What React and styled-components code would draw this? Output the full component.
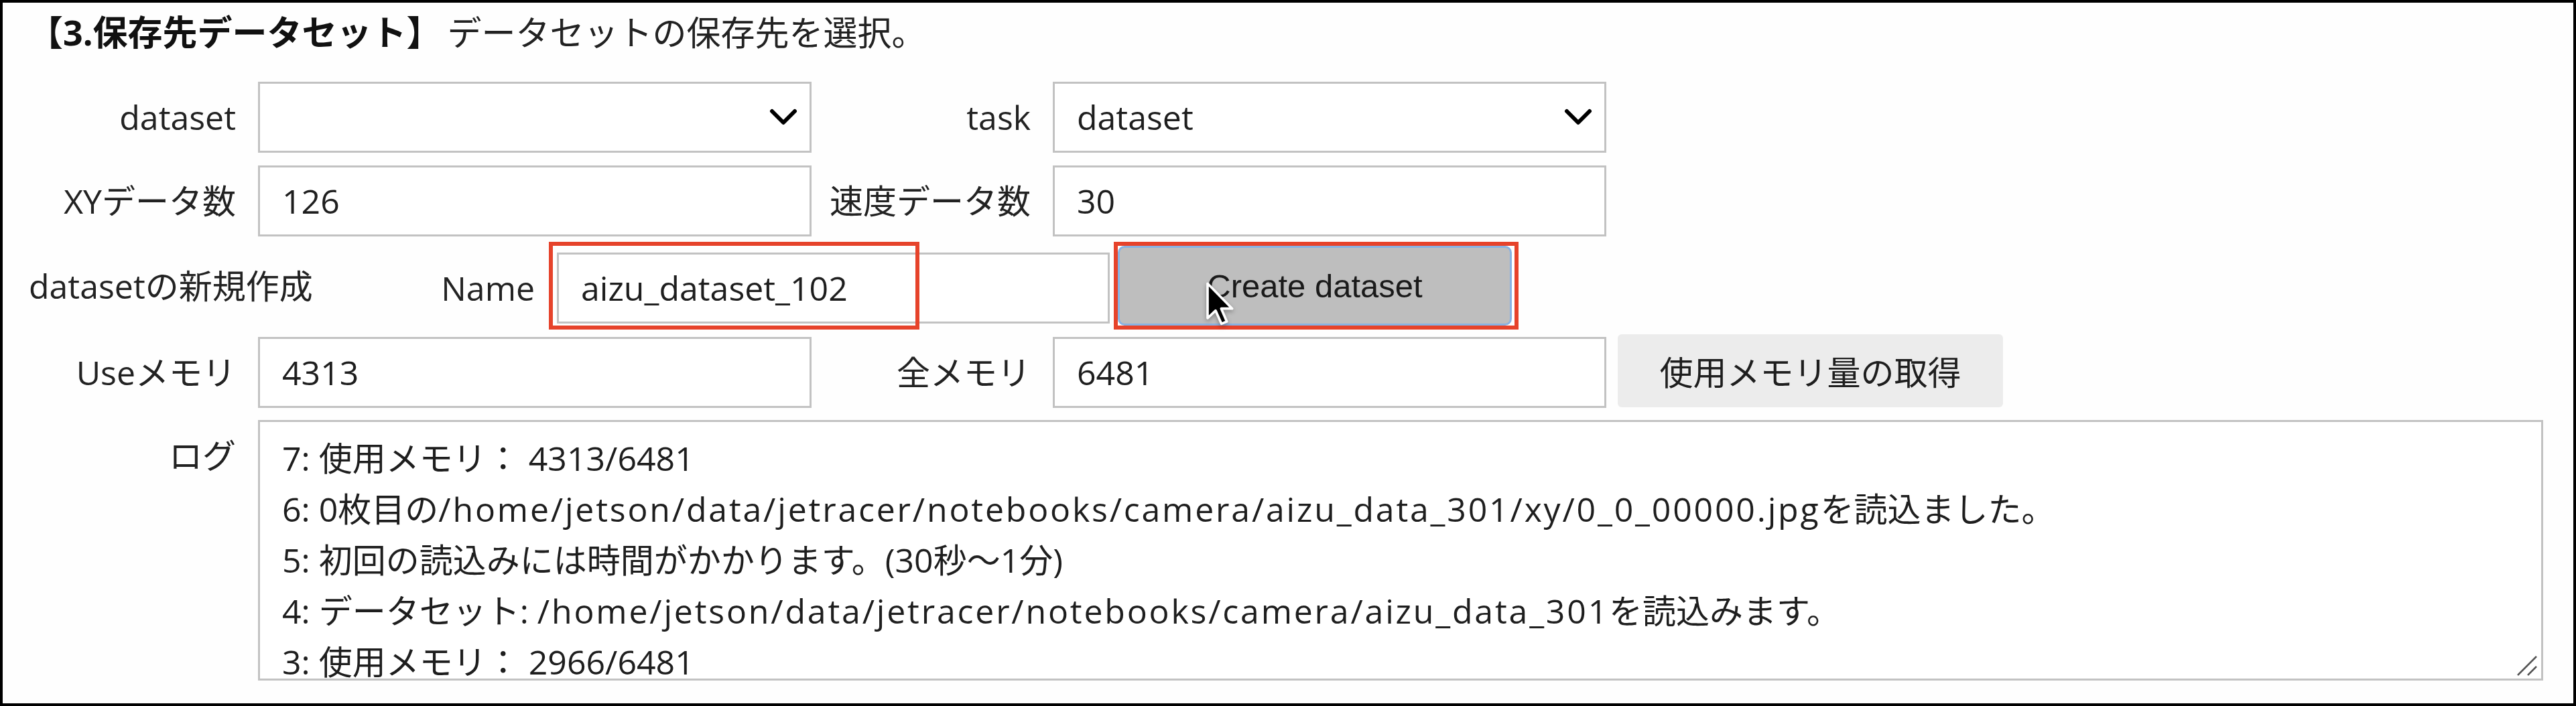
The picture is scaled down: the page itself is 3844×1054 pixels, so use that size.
import React from 'react';
import styled, { createGlobalStyle } from 'styled-components';

const GlobalStyle = createGlobalStyle`
  html, body {
    margin: 0;
    padding: 0;
    background: #fff;
  }
  body {
    font-family: "Open Sans", "Noto Sans CJK JP", sans-serif;
  }
`;

const Frame = styled.div`
  position: relative;
  width: 3844px;
  height: 1054px;
  box-sizing: border-box;
  border: 4px solid #000;
  background: #fefefe;
  padding: 14px 0 0 38px;
  font-size: 50px;
  color: #222;
  overflow: hidden;
`;

const Title = styled.div`
  display: flex;
  align-items: center;
  height: 60px;
  line-height: 60px;
  white-space: nowrap;
`;

const TitleStrong = styled.span`
  font-weight: 700;
  font-size: 52px;
  color: #111;
`;

const TitleNote = styled.span`
  margin-left: 9px;
  font-size: 51px;
`;

const Row = styled.div`
  display: flex;
  align-items: ${p => p.$align || 'center'};
  gap: 17px;
  height: ${p => p.$h}px;
  margin-top: ${p => p.$mt}px;
`;

const Field = styled.div`
  display: flex;
  align-items: ${p => p.$align || 'center'};
  gap: 33px;
  margin-top: ${p => p.$shift || 0}px;
`;

const Label = styled.label`
  flex: none;
  width: ${p => p.$w || 310}px;
  text-align: ${p => p.$left ? 'left' : 'right'};
  white-space: nowrap;
  line-height: 60px;
  padding-left: ${p => p.$left ? 1 : 0}px;
  box-sizing: border-box;
  margin-top: ${p => p.$mt || 0}px;
`;

const TextInput = styled.input`
  flex: none;
  width: ${p => p.$w || 826}px;
  height: 106px;
  box-sizing: border-box;
  border: 3px solid #c2c2c2;
  border-radius: 0;
  background: #fff;
  padding: 0 18px 0 33px;
  font: inherit;
  color: #1e1e1e;
  outline: none;
`;

const SelectBox = styled.div`
  flex: none;
  width: 826px;
  height: 106px;
  box-sizing: border-box;
  border: 3px solid #c2c2c2;
  background: #fff;
  padding: 0 18px 0 33px;
  display: flex;
  align-items: center;
  justify-content: space-between;
  color: #1e1e1e;
`;

const Chevron = () => (
  <svg width="42" height="26" viewBox="0 0 42 26">
    <polyline points="4,4 21,21 38,4" fill="none" stroke="#000" strokeWidth="6" strokeLinecap="round" strokeLinejoin="round" />
  </svg>
);

const CreateButton = styled.button`
  flex: none;
  width: 588px;
  height: 119px;
  margin-left: -5px;
  box-sizing: border-box;
  background: #bebebe;
  border: 3px solid #88b2e2;
  border-radius: 10px;
  font: 49px "Liberation Sans", "Noto Sans CJK JP", sans-serif;
  color: #1a1a1a;
  padding: 0;
`;

const GrayButton = styled.button`
  flex: none;
  width: 575px;
  height: 109px;
  align-self: flex-start;
  margin-top: -4px;
  box-sizing: border-box;
  background: #ececec;
  border: none;
  border-radius: 6px;
  font: inherit;
  color: #1e1e1e;
  padding: 0;
`;

const LogBox = styled.div`
  position: relative;
  flex: none;
  width: 3410px;
  height: 389px;
  box-sizing: border-box;
  border: 3px solid #c2c2c2;
  background: #fff;
  padding: 16px 33px 0;
  line-height: 76px;
  color: #1e1e1e;
`;

const LogLine = styled.div`
  white-space: pre;
  height: ${p => p.$last ? 60 : 76}px;
`;

const PathText = styled.span`
  letter-spacing: 2.8px;
`;

const ResizeGrip = styled.svg`
  position: absolute;
  right: 5px;
  bottom: 3px;
`;

const Callout = styled.div`
  position: absolute;
  left: ${p => p.$x}px;
  top: ${p => p.$y}px;
  width: ${p => p.$w}px;
  height: ${p => p.$h}px;
  box-sizing: border-box;
  border: 6px solid #e6432b;
  pointer-events: none;
`;

const Pointer = styled.svg`
  position: absolute;
  left: ${p => p.$x}px;
  top: ${p => p.$y}px;
  filter: drop-shadow(0 3px 3px rgba(0, 0, 0, 0.3));
`;

const dataPath = '/home/jetson/data/jetracer/notebooks/camera/aizu_data_301';

export default function App() {
  return (
    <>
      <GlobalStyle />
      <Frame>
        <Title>
          <TitleStrong>【3.保存先データセット】</TitleStrong>
          <TitleNote>データセットの保存先を選択。</TitleNote>
        </Title>

        <Row $h={106} $mt={44}>
          <Field>
            <Label>dataset</Label>
            <SelectBox role="combobox"><span></span><Chevron /></SelectBox>
          </Field>
          <Field>
            <Label>task</Label>
            <SelectBox role="combobox"><span>dataset</span><Chevron /></SelectBox>
          </Field>
        </Row>

        <Row $h={106} $mt={19}>
          <Field>
            <Label>XYデータ数</Label>
            <TextInput readOnly value="126" />
          </Field>
          <Field>
            <Label>速度データ数</Label>
            <TextInput readOnly value="30" />
          </Field>
        </Row>

        <Row $h={119} $mt={14}>
          <Label $left $w={429}>datasetの新規作成</Label>
          <Field $shift={6}>
            <Label>Name</Label>
            <TextInput readOnly value="aizu_dataset_102" $w={825} />
          </Field>
          <CreateButton>Create dataset</CreateButton>
        </Row>

        <Row $h={106} $mt={17}>
          <Field>
            <Label>Useメモリ</Label>
            <TextInput readOnly value="4313" />
          </Field>
          <Field>
            <Label>全メモリ</Label>
            <TextInput readOnly value="6481" />
          </Field>
          <GrayButton>使用メモリ量の取得</GrayButton>
        </Row>

        <Row $h={389} $mt={18} $align="flex-start">
          <Field $align="flex-start">
            <Label $mt={23}>ログ</Label>
            <LogBox>
              <LogLine>7: 使用メモリ： 4313/6481</LogLine>
              <LogLine>6: 0枚目の<PathText>{dataPath}/xy/0_0_00000.jpg</PathText>を読込ました。</LogLine>
              <LogLine>5: 初回の読込みには時間がかかります。(30秒〜1分)</LogLine>
              <LogLine>4: データセット: <PathText>{dataPath}</PathText>を読込みます。</LogLine>
              <LogLine $last>3: 使用メモリ： 2966/6481</LogLine>
              <ResizeGrip width="32" height="32" viewBox="0 0 32 32">
                <line x1="2" y1="30" x2="30" y2="2" stroke="#555" strokeWidth="2.5" />
                <line x1="17" y1="30" x2="30" y2="17" stroke="#555" strokeWidth="2.5" />
              </ResizeGrip>
            </LogBox>
          </Field>
        </Row>

        <Callout $x={815} $y={357} $w={553} $h={131} />
        <Callout $x={1658} $y={357} $w={604} $h={131} />

        <Pointer $x={1794} $y={416} width="48" height="70" viewBox="0 0 14 21">
          <path d="M1 1 L1 16.5 L4.6 13.1 L7.2 19 L9.6 18 L7.1 12.2 L12 12.2 Z" fill="#000" stroke="#fff" strokeWidth="1.1" strokeLinejoin="round" />
        </Pointer>
      </Frame>
    </>
  );
}
